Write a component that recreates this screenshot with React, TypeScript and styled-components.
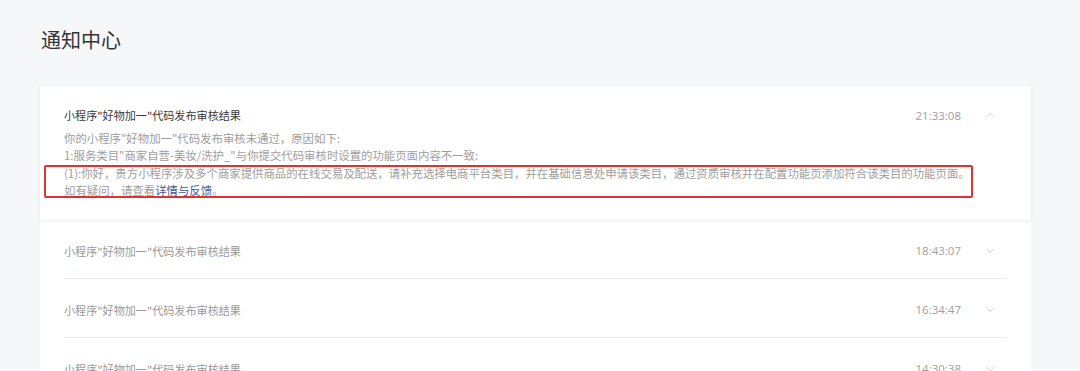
import styled, { createGlobalStyle } from "styled-components";

const GlobalStyle = createGlobalStyle`
    body {
        margin: 0;
        background-color: #F6F7F9;
        font-family: "Noto Sans CJK SC", "Noto Sans", sans-serif;
    }
`;

const Page = styled.div`
    padding: 26px 49px 0 40px;
    height: 371px;
    box-sizing: border-box;
    overflow: hidden;
`;

const Heading = styled.h1`
    margin: 0 0 32px 1px;
    font-size: 20px;
    line-height: 28px;
    font-weight: 400;
    color: #353535;
`;

const Panel = styled.div`
    background-color: #FFF;
    display: flex;
    flex-direction: column;
`;

const OpenItem = styled.div`
    position: relative;
    padding: 20px 24px 20px 24px;
    box-shadow: 0 1px 4px rgba(0, 0, 0, 0.09);
`;

const Row = styled.div`
    display: flex;
    align-items: center;
    height: 18px;
`;

const Title = styled.div<{ $muted?: boolean }>`
    flex: 1;
    font-size: 11.1px;
    color: ${(p) => (p.$muted ? "#9A9A9A" : "#3A3A3A")};
`;

const Time = styled.span`
    font-family: "Open Sans", sans-serif;
    font-size: 11.5px;
    color: #A0A0A0;
`;

const Caret = styled.svg`
    width: 9px;
    height: 6px;
    margin: 0 12px 0 25px;
`;

const Body = styled.div`
    margin-top: 6px;
    font-size: 11.4px;
    color: #9E9E9E;
`;

const Line = styled.div`
    height: 17.4px;
    line-height: 17.4px;
    white-space: nowrap;
`;

const Link = styled.a`
    color: #3E5A97;
    text-decoration: none;
`;

const Mark = styled.div`
    position: absolute;
    left: 4px;
    top: 79px;
    width: 929px;
    height: 33px;
    box-sizing: border-box;
    border: 2px solid #DC3530;
    border-radius: 2px;
`;

const Item = styled.div`
    margin: 0 24px;
    padding: 22px 0 18px 0;
    border-bottom: 1px solid #EBEBEB;
`;

function Arrow({ up }: { up?: boolean }) {
    return (
        <Caret viewBox="0 0 9 6">
            <path d={up ? "M1 5 L4.5 1.5 L8 5" : "M1 1 L4.5 4.5 L8 1"} fill="none" stroke="#D6D6D6" strokeWidth="1" />
        </Caret>
    );
}

const title = "小程序\"好物加一\"代码发布审核结果";
const rest = ["18:43:07", "16:34:47", "14:30:38"];

export default function App() {
    return (
        <>
            <GlobalStyle />
            <Page>
                <Heading>通知中心</Heading>
                <Panel>
                    <OpenItem>
                        <Row>
                            <Title>{title}</Title>
                            <Time>21:33:08</Time>
                            <Arrow up />
                        </Row>
                        <Body>
                            <Line>你的小程序"好物加一"代码发布审核未通过，原因如下:</Line>
                            <Line>1:服务类目"商家自营-美妆/洗护_"与你提交代码审核时设置的功能页面内容不一致:</Line>
                            <Line>(1):你好，贵方小程序涉及多个商家提供商品的在线交易及配送，请补充选择电商平台类目，并在基础信息处申请该类目，通过资质审核并在配置功能页添加符合该类目的功能页面。</Line>
                            <Line>如有疑问，请查看<Link>详情与反馈</Link>。</Line>
                        </Body>
                        <Mark />
                    </OpenItem>
                    {rest.map((t) => (
                        <Item key={t}>
                            <Row>
                                <Title $muted>{title}</Title>
                                <Time>{t}</Time>
                                <Arrow />
                            </Row>
                        </Item>
                    ))}
                </Panel>
            </Page>
        </>
    );
}
